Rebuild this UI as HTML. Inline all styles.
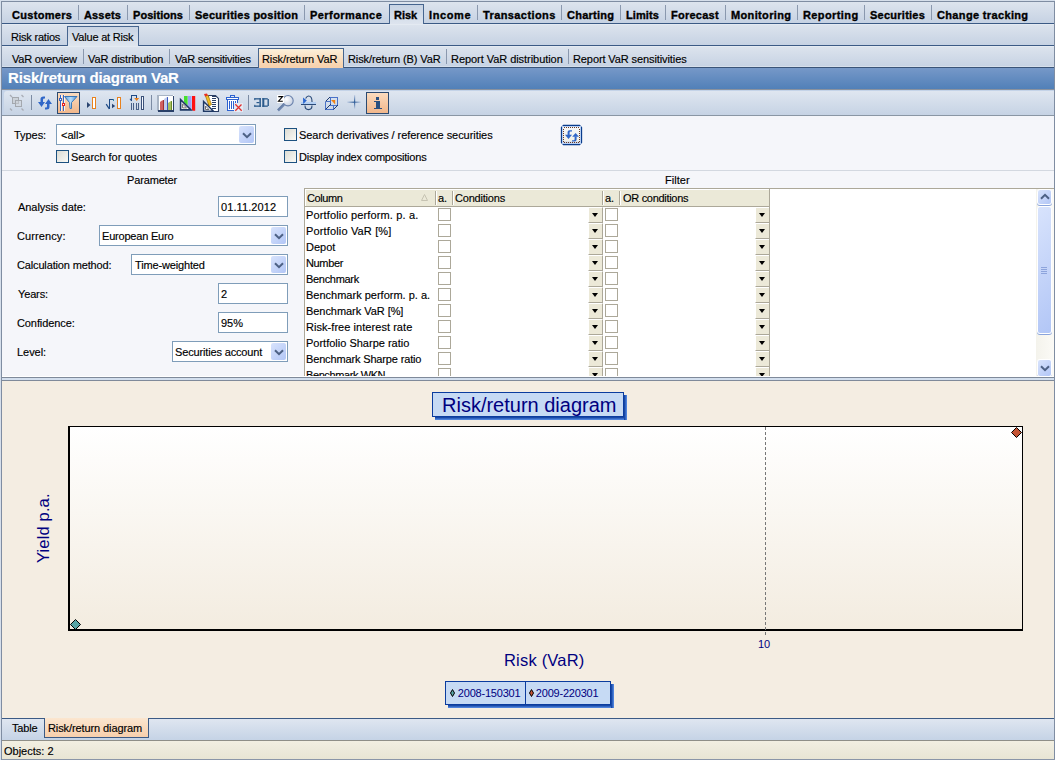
<!DOCTYPE html>
<html><head><meta charset="utf-8"><style>
*{margin:0;padding:0;box-sizing:border-box}
html,body{width:1055px;height:760px;overflow:hidden;background:#d6dfeb;font-family:"Liberation Sans",sans-serif;font-size:11px;color:#000}
.a{position:absolute}
.t{position:absolute;white-space:nowrap;line-height:13px;letter-spacing:-0.2px;-webkit-text-stroke-width:0.15px}
.b{font-weight:bold;letter-spacing:0.3px}
.sep{position:absolute;width:1px;background:#8e9bb0}
.cb{position:absolute;width:13px;height:13px;border:1px solid #1c5180;background:linear-gradient(135deg,#dcdcd4,#f8f8f4)}
.inp{position:absolute;background:#fff;border:1px solid #7f9db9}
.ddb{position:absolute;width:15px;height:17px;border-radius:2px;background:linear-gradient(135deg,#d6e2fc,#b3c7f7)}
.gcb{position:absolute;width:13px;height:13px;border:1px solid #aca899;background:#fff}
.gdd{position:absolute;width:15px;height:16px;background:#ece9d8;border-left:1px solid #fff;border-top:1px solid #fff;border-right:1px solid #aca899;border-bottom:1px solid #aca899}
.tri{position:absolute;width:0;height:0;border-left:3.5px solid transparent;border-right:3.5px solid transparent;border-top:4px solid #000}
</style></head><body>
<div class="a" style="left:1px;top:1px;width:1054px;height:759px;border-left:1px solid #7f8da2;border-top:1px solid #7f8da2;border-right:1px solid #7f8da2"></div>
<div class="a" style="left:2px;top:2px;width:1052px;height:21px;background:linear-gradient(#dde4ee,#c6d2e3)"></div>
<div class="a" style="left:2px;top:23px;width:1052px;height:1px;background:#3b5a85"></div>
<div class="a" style="left:389px;top:4px;width:35px;height:20px;background:linear-gradient(#c7d3e4,#dde4ee);border:1px solid #46658f;border-bottom:none"></div>
<div class="a" style="left:78px;top:5px;width:1px;height:15px;background:#8a98ae"></div>
<div class="a" style="left:127px;top:5px;width:1px;height:15px;background:#8a98ae"></div>
<div class="a" style="left:189px;top:5px;width:1px;height:15px;background:#8a98ae"></div>
<div class="a" style="left:304px;top:5px;width:1px;height:15px;background:#8a98ae"></div>
<div class="a" style="left:477px;top:5px;width:1px;height:15px;background:#8a98ae"></div>
<div class="a" style="left:561px;top:5px;width:1px;height:15px;background:#8a98ae"></div>
<div class="a" style="left:620px;top:5px;width:1px;height:15px;background:#8a98ae"></div>
<div class="a" style="left:665px;top:5px;width:1px;height:15px;background:#8a98ae"></div>
<div class="a" style="left:725px;top:5px;width:1px;height:15px;background:#8a98ae"></div>
<div class="a" style="left:797px;top:5px;width:1px;height:15px;background:#8a98ae"></div>
<div class="a" style="left:864px;top:5px;width:1px;height:15px;background:#8a98ae"></div>
<div class="a" style="left:931px;top:5px;width:1px;height:15px;background:#8a98ae"></div>
<div class="t" style="left:12px;top:9px;letter-spacing:0.3px;font-weight:bold;-webkit-text-stroke-width:0.35px;">Customers</div>
<div class="t" style="left:84px;top:9px;letter-spacing:0.15px;font-weight:bold;-webkit-text-stroke-width:0.35px;">Assets</div>
<div class="t" style="left:133px;top:9px;letter-spacing:0.05px;font-weight:bold;-webkit-text-stroke-width:0.35px;">Positions</div>
<div class="t" style="left:195px;top:9px;letter-spacing:0.25px;font-weight:bold;-webkit-text-stroke-width:0.35px;">Securities position</div>
<div class="t" style="left:310px;top:9px;letter-spacing:0.45px;font-weight:bold;-webkit-text-stroke-width:0.35px;">Performance</div>
<div class="t" style="left:394px;top:9px;letter-spacing:0.0px;font-weight:bold;-webkit-text-stroke-width:0.35px;">Risk</div>
<div class="t" style="left:429px;top:9px;letter-spacing:0.6px;font-weight:bold;-webkit-text-stroke-width:0.35px;">Income</div>
<div class="t" style="left:483px;top:9px;letter-spacing:0.4px;font-weight:bold;-webkit-text-stroke-width:0.35px;">Transactions</div>
<div class="t" style="left:567px;top:9px;letter-spacing:0.25px;font-weight:bold;-webkit-text-stroke-width:0.35px;">Charting</div>
<div class="t" style="left:626px;top:9px;letter-spacing:0.1px;font-weight:bold;-webkit-text-stroke-width:0.35px;">Limits</div>
<div class="t" style="left:671px;top:9px;letter-spacing:0.25px;font-weight:bold;-webkit-text-stroke-width:0.35px;">Forecast</div>
<div class="t" style="left:731px;top:9px;letter-spacing:0.35px;font-weight:bold;-webkit-text-stroke-width:0.35px;">Monitoring</div>
<div class="t" style="left:803px;top:9px;letter-spacing:0.4px;font-weight:bold;-webkit-text-stroke-width:0.35px;">Reporting</div>
<div class="t" style="left:870px;top:9px;letter-spacing:0.25px;font-weight:bold;-webkit-text-stroke-width:0.35px;">Securities</div>
<div class="t" style="left:937px;top:9px;letter-spacing:0.35px;font-weight:bold;-webkit-text-stroke-width:0.35px;">Change tracking</div>
<div class="a" style="left:2px;top:24px;width:1052px;height:21px;background:linear-gradient(#dde4ee,#c6d2e3)"></div>
<div class="a" style="left:2px;top:24px;width:1052px;height:1px;background:#e4eaf2"></div>
<div class="a" style="left:2px;top:45px;width:65px;height:1px;background:#3b5a85"></div>
<div class="a" style="left:139px;top:45px;width:915px;height:1px;background:#3b5a85"></div>
<div class="a" style="left:67px;top:26px;width:72px;height:20px;background:linear-gradient(#c9d4e4,#dfe6ef);border:1px solid #46658f;border-bottom:none"></div>
<div class="t" style="left:11px;top:31px;letter-spacing:-0.2px;">Risk ratios</div>
<div class="t" style="left:72px;top:31px;letter-spacing:-0.2px;">Value at Risk</div>
<div class="a" style="left:2px;top:46px;width:1052px;height:21px;background:linear-gradient(#dde4ee,#c6d2e3)"></div>
<div class="a" style="left:2px;top:46px;width:1052px;height:1px;background:#e4eaf2"></div>
<div class="a" style="left:258px;top:48px;width:86px;height:19px;background:linear-gradient(#fcf0da,#f7d0ab);border:1px solid #46658f;border-bottom:none"></div>
<div class="a" style="left:83px;top:49px;width:1px;height:15px;background:#8a98ae"></div>
<div class="a" style="left:169px;top:49px;width:1px;height:15px;background:#8a98ae"></div>
<div class="a" style="left:446px;top:49px;width:1px;height:15px;background:#8a98ae"></div>
<div class="a" style="left:568px;top:49px;width:1px;height:15px;background:#8a98ae"></div>
<div class="t" style="left:12px;top:53px;letter-spacing:-0.2px;">VaR overview</div>
<div class="t" style="left:88px;top:53px;letter-spacing:-0.1px;">VaR distribution</div>
<div class="t" style="left:175px;top:53px;letter-spacing:-0.25px;">VaR sensitivities</div>
<div class="t" style="left:262px;top:53px;letter-spacing:-0.1px;">Risk/return VaR</div>
<div class="t" style="left:348px;top:53px;letter-spacing:-0.1px;">Risk/return (B) VaR</div>
<div class="t" style="left:451px;top:53px;letter-spacing:-0.05px;">Report VaR distribution</div>
<div class="t" style="left:573px;top:53px;letter-spacing:-0.1px;">Report VaR sensitivities</div>
<div class="a" style="left:2px;top:66px;width:1052px;height:1px;background:#d6dfeb"></div>
<div class="a" style="left:2px;top:67px;width:1052px;height:1px;background:#3a5478"></div>
<div class="a" style="left:2px;top:68px;width:1052px;height:21px;background:linear-gradient(#7698c8,#5180b8)"></div>
<div class="a" style="left:259px;top:66px;width:84px;height:2px;background:#f8d2ae"></div>
<div class="a" style="left:258px;top:66px;width:1px;height:2px;background:#46658f"></div>
<div class="a" style="left:343px;top:66px;width:1px;height:2px;background:#46658f"></div>
<div class="t" style="left:8px;top:69px;font-size:15px;line-height:17px;font-weight:bold;color:#fff;letter-spacing:-0.15px">Risk/return diagram VaR</div>
<div class="a" style="left:2px;top:89px;width:1052px;height:1px;background:#8a929e"></div>
<div class="a" style="left:2px;top:90px;width:1052px;height:26px;background:#c4d3e8"></div>
<div class="a" style="left:4px;top:91px;width:1050px;height:24px;border-radius:3px 0 0 3px;background:linear-gradient(#dfe6f0,#c6d3e4)"></div>
<div class="a" style="left:2px;top:115px;width:1052px;height:1px;background:#8a96a4"></div>
<svg class="a" style="left:0;top:88px" width="400" height="28" viewBox="0 88 400 28" shape-rendering="crispEdges"><defs><linearGradient id="og" x1="0" y1="0" x2="0" y2="1"><stop offset="0" stop-color="#fbdcc0"/><stop offset="1" stop-color="#f1b68a"/></linearGradient><linearGradient id="fun" x1="0" y1="0" x2="1" y2="0"><stop offset="0" stop-color="#5aa0e0"/><stop offset="0.5" stop-color="#b8dcf8"/><stop offset="1" stop-color="#4a90d8"/></linearGradient></defs><rect x="12.5" y="97.5" width="6" height="6" fill="#c8ccd2" fill-opacity="0.7" stroke="#a4a8ae"/><rect x="15.5" y="100.5" width="6" height="6" fill="#d0d4da" fill-opacity="0.5" stroke="#a4a8ae"/><g stroke="#a8acb4" stroke-width="1.2" shape-rendering="auto"><line x1="10" y1="95" x2="12" y2="97"/><line x1="21.5" y1="95" x2="23.5" y2="97"/><line x1="10" y1="108.5" x2="12" y2="110.5"/><line x1="21.5" y1="108.5" x2="23.5" y2="110.5"/></g><rect x="31" y="95" width="1" height="15" fill="#7c8ba3"/><rect x="151" y="95" width="1" height="15" fill="#7c8ba3"/><rect x="248" y="95" width="1" height="15" fill="#7c8ba3"/><g fill="#2f66c8" shape-rendering="auto"><path d="M38,102 L45,102 L42.5,105.5 L41.5,107 L40.5,105.5 Z"/><path d="M40.5,102.5 L40.5,99 Q40.5,96.5 43.5,96.5 L45,96.5 L45,98.5 L43.8,98.5 Q43,98.5 43,100 L43,102.5 Z"/><path d="M45,104 L52,104 L49.5,100.5 L48.5,99 L47.5,100.5 Z"/><path d="M47,103.5 L49.5,103.5 L49.5,107 Q49.5,109.5 46.5,109.5 L45,109.5 L45,107.5 L46.2,107.5 Q47,107.5 47,106 Z"/></g><rect x="57.5" y="92.5" width="22" height="21" fill="url(#og)" stroke="#2c4a70"/><rect x="60" y="95" width="1" height="16" fill="#3a66c4"/><rect x="61" y="95" width="1" height="16" fill="#ffffff" opacity="0.8"/><rect x="63" y="95" width="1" height="16" fill="#3a66c4"/><rect x="64" y="95" width="1" height="16" fill="#ffffff" opacity="0.8"/><rect x="59" y="98" width="3" height="3" fill="#3a66c4"/><rect x="60" y="99" width="1" height="1" fill="#fff"/><rect x="62" y="103" width="3" height="3" fill="#e82020"/><rect x="63" y="104" width="1" height="1" fill="#fff"/><path d="M64.5,96.5 L77,96.5 L71.5,102.5 L71.5,108.5 L70,108.5 L69.5,102.5 Z" fill="url(#fun)" stroke="#3c78b8" stroke-width="1" shape-rendering="auto"/><path d="M87,102 L90.5,105 L87,108 Z" fill="#2a4470" shape-rendering="auto"/><rect x="92.5" y="97.5" width="3" height="11" fill="#fff" stroke="#e8821e"/><path d="M106.2,104.2 L109.3,108.8" stroke="#1e4a86" stroke-width="1.2" shape-rendering="auto"/><rect x="109" y="99" width="1.3" height="10" fill="#1e4a86"/><rect x="109" y="99" width="5" height="1.2" fill="#1e4a86"/><rect x="113" y="99" width="1.2" height="2" fill="#2a8aa8"/><path d="M112,103.8 L115.2,106 L112,108.3 Z" fill="#2a4470" shape-rendering="auto"/><rect x="117.5" y="97.5" width="3" height="11" fill="#f4f8ff" stroke="#e8821e"/><path d="M130,98.8 L131.6,101" stroke="#1e4a86" stroke-width="1.1" shape-rendering="auto"/><rect x="131" y="95" width="1.2" height="6" fill="#1e4a86"/><rect x="131" y="95" width="6" height="1.2" fill="#1e4a86"/><rect x="136" y="95" width="1.2" height="2.5" fill="#1e4a86"/><path d="M134.2,98 L139.2,98 L136.7,101 Z" fill="#e8801e" shape-rendering="auto"/><g fill="#4a6088"><rect x="131" y="103" width="1" height="7"/><rect x="133" y="103" width="1" height="7"/><rect x="136" y="103" width="1" height="7"/><rect x="138" y="103" width="1" height="7"/><rect x="136" y="109" width="3" height="1"/></g><rect x="141.5" y="96.5" width="2" height="13" fill="#f4f8ff" stroke="#3a5078"/><rect x="157" y="95" width="17" height="16" fill="#ffffff"/><rect x="157" y="95" width="16" height="1" fill="#a8b4c4"/><rect x="157" y="95" width="2" height="16" fill="#a8b4c4"/><rect x="173" y="96" width="1" height="15" fill="#2a4068"/><rect x="158" y="110" width="16" height="2" fill="#2a4068"/><g shape-rendering="auto"><path d="M160,102 L162,100.5 L164,100 L164,110 L160,110 Z" fill="#d06060"/><path d="M163,100.3 L164,100 L164,110 L163,110 Z" fill="#a03030"/><path d="M164,99 L166.5,97.3 L168,97 L168,110 L164,110 Z" fill="#c0ccec"/><path d="M167,97.2 L168,97 L168,110 L167,110 Z" fill="#3a58c0"/><path d="M168,103 L170.5,101.3 L172,101 L172,110 L168,110 Z" fill="#a8c060"/><path d="M171,101.2 L172,101 L172,110 L171,110 Z" fill="#6a8a28"/></g><g shape-rendering="auto"><path d="M184,96 L187.6,96 L187.6,105.6 L184,102 Z" fill="#44e030"/><path d="M188,96 L191.5,96 L191.5,109.5 L188,106 Z" fill="#9aa4f4"/><path d="M192,96 L195.2,96 L195.2,110.8 L193,110.8 L192,110 Z" fill="#ff1010"/><path d="M180.6,99.6 L180.6,109.9 L191,109.9 Z" fill="#fff" stroke="#1e3864" stroke-width="1.6" stroke-linejoin="miter"/><path d="M182.6,104 L182.6,107.9 L186.5,107.9 Z" fill="#fff" stroke="#707070" stroke-width="1"/></g><path d="M208.5,95.5 L215.5,95.5 L218.5,98.5 L218.5,111.5 L208.5,111.5 Z" fill="#fff" stroke="#2a3e64" stroke-width="1.1" shape-rendering="auto"/><g fill="#2a3e64"><rect x="212" y="96" width="4" height="1"/><rect x="212" y="98" width="4" height="1"/><rect x="212" y="100" width="4" height="1"/><rect x="212" y="102" width="4" height="1"/><rect x="212" y="104" width="4" height="1"/><rect x="212" y="106" width="4" height="1"/><rect x="212" y="108" width="4" height="1"/></g><path d="M203.6,101.5 L203.6,111.3 L213.5,111.3 Z" fill="#fff" stroke="#1e3864" stroke-width="1.5" shape-rendering="auto"/><path d="M205.5,106 L205.5,109.5 L209,109.5 Z" fill="none" stroke="#707070" shape-rendering="auto"/><path d="M205.5,96 L208,95 L211.5,104.5 L209,106 Z" fill="#f0c020" stroke="#a07010" stroke-width="0.7" shape-rendering="auto"/><path d="M204,94 L207,93.5 L207.8,95.5 L205,96.5 Z" fill="#e83020" shape-rendering="auto"/><rect x="227" y="100" width="11" height="11" fill="#fff"/><rect x="226" y="97" width="13" height="3" fill="#2d62d0"/><rect x="227" y="98" width="11" height="1" fill="#fff"/><rect x="230" y="95" width="5" height="2" fill="#2d62d0"/><rect x="231" y="96" width="3" height="1" fill="#dfe8f8"/><rect x="227" y="100" width="1" height="11" fill="#2d62d0"/><rect x="227" y="110" width="8" height="1" fill="#2d62d0"/><rect x="237" y="100" width="1" height="3" fill="#2d62d0"/><rect x="229" y="101" width="1" height="8" fill="#2d62d0"/><rect x="231" y="101" width="1" height="8" fill="#2d62d0"/><rect x="233" y="101" width="1" height="8" fill="#2d62d0"/><rect x="235" y="101" width="1" height="2" fill="#2d62d0"/><rect x="234" y="103" width="9" height="9" fill="#e4eaf4"/><path d="M235.3,104.3 L241.7,110.7 M241.5,104.5 L235.3,110.7" stroke="#e03030" stroke-width="1.3" shape-rendering="auto"/><g fill="#2a5a8c" shape-rendering="auto"><rect x="254.3" y="98.2" width="6.5" height="1.3"/><rect x="259.4" y="98.2" width="1.5" height="8.6"/><rect x="256.5" y="102" width="3" height="1.2"/><rect x="254.3" y="105.5" width="6.5" height="1.3"/><rect x="254.3" y="98.2" width="1" height="2"/><rect x="254.3" y="104.8" width="1" height="2"/><rect x="262.3" y="98.2" width="2" height="8.6"/><rect x="262.3" y="98.2" width="5.5" height="1.3"/><rect x="262.3" y="105.5" width="5.5" height="1.3"/><rect x="267.5" y="99" width="1.4" height="7"/></g><defs><radialGradient id="mg" cx="0.35" cy="0.35" r="0.7"><stop offset="0" stop-color="#ffffff"/><stop offset="1" stop-color="#c4cee0"/></radialGradient><linearGradient id="hg" x1="0" y1="0" x2="1" y2="1"><stop offset="0" stop-color="#3c5a8a"/><stop offset="1" stop-color="#9aaccc"/></linearGradient></defs><circle cx="288" cy="100.7" r="5.2" fill="url(#mg)" stroke="#6a82ac" stroke-width="1.1" shape-rendering="auto"/><line x1="284" y1="104.5" x2="278" y2="110.5" stroke="url(#hg)" stroke-width="2.6" shape-rendering="auto"/><rect x="277" y="95" width="7" height="8" fill="#fff"/><path d="M278.3,96.6 L282.6,96.6 L278.5,101.2 L282.8,101.2" fill="none" stroke="#000" stroke-width="1.1" shape-rendering="auto"/><rect x="301" y="102" width="15" height="2" fill="#b4d0f4"/><rect x="301" y="104" width="15" height="1" fill="#2a4a78"/><path d="M305.6,98.6 Q307,96 308.5,96 Q312,96 312,101.5 L312,102" fill="none" stroke="#2a4a78" stroke-width="1.1" shape-rendering="auto"/><path d="M305,105.5 Q305,109.6 308.5,109.6 Q312,109.6 312,105.5" fill="none" stroke="#2a4a78" stroke-width="1.1" shape-rendering="auto"/><path d="M303,97.6 L306.8,100.6 L303.2,104 Z" fill="#2a66d0" shape-rendering="auto"/><g fill="none" stroke="#4a72c8" stroke-width="1"><rect x="330.5" y="97.5" width="7" height="8"/><path d="M325.5,101.5 L325.5,109.5 L333.5,109.5 L333.5,105.5 M325.5,101.5 L330.5,101.5"/></g><path d="M331,100 L335.2,100 L335.2,104.5 Z" fill="#f08010" shape-rendering="auto"/><g stroke="#1e3a70" stroke-width="1" shape-rendering="auto" fill="none"><line x1="325.5" y1="101.5" x2="330" y2="97"/><line x1="333.5" y1="109.5" x2="338" y2="105"/><line x1="325.5" y1="109.5" x2="331" y2="104"/></g><defs><linearGradient id="pv" x1="0" y1="0" x2="0" y2="1"><stop offset="0" stop-color="#c8d4e8"/><stop offset="0.5" stop-color="#2c5a96"/><stop offset="1" stop-color="#c8d4e8"/></linearGradient><linearGradient id="ph" x1="0" y1="0" x2="1" y2="0"><stop offset="0" stop-color="#c8d4e8"/><stop offset="0.5" stop-color="#2c5a96"/><stop offset="1" stop-color="#c8d4e8"/></linearGradient></defs><rect x="354" y="95" width="1.2" height="14" fill="url(#pv)" shape-rendering="auto"/><rect x="347" y="101.6" width="14" height="1.2" fill="url(#ph)" shape-rendering="auto"/><rect x="366.5" y="92.5" width="22" height="21" fill="url(#og)" stroke="#2c4a70"/><rect x="376" y="97" width="3" height="3" fill="#2a5080"/><rect x="376" y="101" width="4" height="7" fill="#2a5080"/><rect x="374" y="101" width="2" height="1" fill="#2a5080"/><rect x="374" y="108" width="8" height="1" fill="#2a5080"/></svg>
<div class="a" style="left:2px;top:116px;width:1052px;height:261px;background:#f5f6fa"></div>
<div class="t" style="left:14px;top:129px;letter-spacing:-0.05px;">Types:</div>
<div class="a" style="left:56px;top:124px;width:200px;height:21px;background:#fff;border:1px solid #7f9db9"></div>
<div class="t" style="left:61px;top:129px;letter-spacing:0.0px;">&lt;all&gt;</div>
<div class="a" style="left:239px;top:126px;width:15px;height:17px;border-radius:2px;background:linear-gradient(135deg,#d8e3fc,#b2c6f6)"></div>
<svg class="a" style="left:241.5px;top:129.5px" width="10" height="10" viewBox="-5 -5 10 10"><path d="M-4,-1.8 L0,2.2 L4,-1.8" fill="none" stroke="#4d6185" stroke-width="2"/></svg>
<div class="a" style="left:56px;top:150px;width:13px;height:13px;border:1px solid #1c5180;background:linear-gradient(135deg,#dcdcd4,#fafaf6)"></div>
<div class="t" style="left:71px;top:151px;letter-spacing:-0.05px;">Search for quotes</div>
<div class="a" style="left:284px;top:128px;width:13px;height:13px;border:1px solid #1c5180;background:linear-gradient(135deg,#dcdcd4,#fafaf6)"></div>
<div class="t" style="left:299px;top:129px;letter-spacing:-0.05px;">Search derivatives / reference securities</div>
<div class="a" style="left:284px;top:150px;width:13px;height:13px;border:1px solid #1c5180;background:linear-gradient(135deg,#dcdcd4,#fafaf6)"></div>
<div class="t" style="left:299px;top:151px;letter-spacing:-0.2px;">Display index compositions</div>
<svg class="a" style="left:560px;top:124px" width="24" height="22" viewBox="560 124 24 22"><defs><linearGradient id="rg" x1="0" y1="0" x2="0" y2="1"><stop offset="0" stop-color="#f6f8fc"/><stop offset="0.8" stop-color="#f0f0e8"/><stop offset="1" stop-color="#90b0f0"/></linearGradient></defs><path d="M563.5,125.5 L579.5,125.5 L581.5,127.5 L581.5,142.5 L579.5,144.5 L563.5,144.5 L561.5,142.5 L561.5,127.5 Z" fill="url(#rg)" stroke="#0a3c8c" stroke-width="1.3"/><rect x="562.5" y="126.5" width="18" height="17" fill="none" stroke="#b8d0f4" stroke-width="1" shape-rendering="crispEdges"/><g fill="#6a3a22" shape-rendering="crispEdges"><rect x="564" y="127" width="1" height="1"/><rect x="564" y="142" width="1" height="1"/><rect x="566" y="127" width="1" height="1"/><rect x="566" y="142" width="1" height="1"/><rect x="568" y="127" width="1" height="1"/><rect x="568" y="142" width="1" height="1"/><rect x="570" y="127" width="1" height="1"/><rect x="570" y="142" width="1" height="1"/><rect x="572" y="127" width="1" height="1"/><rect x="572" y="142" width="1" height="1"/><rect x="574" y="127" width="1" height="1"/><rect x="574" y="142" width="1" height="1"/><rect x="576" y="127" width="1" height="1"/><rect x="576" y="142" width="1" height="1"/><rect x="578" y="127" width="1" height="1"/><rect x="578" y="142" width="1" height="1"/><rect x="563" y="129" width="1" height="1"/><rect x="579" y="129" width="1" height="1"/><rect x="563" y="131" width="1" height="1"/><rect x="579" y="131" width="1" height="1"/><rect x="563" y="133" width="1" height="1"/><rect x="579" y="133" width="1" height="1"/><rect x="563" y="135" width="1" height="1"/><rect x="579" y="135" width="1" height="1"/><rect x="563" y="137" width="1" height="1"/><rect x="579" y="137" width="1" height="1"/><rect x="563" y="139" width="1" height="1"/><rect x="579" y="139" width="1" height="1"/><rect x="563" y="141" width="1" height="1"/><rect x="579" y="141" width="1" height="1"/></g><g fill="#2f66c8"><path d="M565,134.8 L572,134.8 L568.5,139 Z"/><path d="M567.6,135 L567.6,132 Q567.6,130.2 569.5,130.2 L572,130.2 L572,131.6 L570.6,131.6 Q569.6,131.6 569.6,132.6 L569.6,135 Z"/><path d="M572.2,136.8 L579,136.8 L575.6,133 Z"/><path d="M574.6,136.5 L576.6,136.5 L576.6,139.6 Q576.6,141.6 574.6,141.6 L572,141.6 L572,140.2 L573.6,140.2 Q574.6,140.2 574.6,139.2 Z"/></g></svg>
<div class="a" style="left:2px;top:170px;width:1052px;height:1px;background:#d3d8e0"></div>
<div class="t" style="left:127px;top:174px;letter-spacing:-0.15px;">Parameter</div>
<div class="t" style="left:665px;top:174px;letter-spacing:0.05px;">Filter</div>
<div class="t" style="left:18px;top:201px;letter-spacing:-0.05px;">Analysis date:</div>
<div class="t" style="left:17px;top:230px;letter-spacing:0.1px;">Currency:</div>
<div class="t" style="left:17px;top:259px;letter-spacing:-0.15px;">Calculation method:</div>
<div class="t" style="left:18px;top:288px;letter-spacing:-0.15px;">Years:</div>
<div class="t" style="left:17px;top:317px;letter-spacing:-0.1px;">Confidence:</div>
<div class="t" style="left:17px;top:346px;letter-spacing:-0.05px;">Level:</div>
<div class="a" style="left:218px;top:196px;width:70px;height:21px;background:#fff;border:1px solid #7f9db9"></div>
<div class="t" style="left:221px;top:201px;letter-spacing:0.1px;">01.11.2012</div>
<div class="a" style="left:99px;top:225px;width:189px;height:21px;background:#fff;border:1px solid #7f9db9"></div>
<div class="t" style="left:102px;top:230px;letter-spacing:-0.2px;">European Euro</div>
<div class="a" style="left:271px;top:227px;width:15px;height:17px;border-radius:2px;background:linear-gradient(135deg,#d8e3fc,#b2c6f6)"></div>
<svg class="a" style="left:273.5px;top:230.5px" width="10" height="10" viewBox="-5 -5 10 10"><path d="M-4,-1.8 L0,2.2 L4,-1.8" fill="none" stroke="#4d6185" stroke-width="2"/></svg>
<div class="a" style="left:131px;top:254px;width:157px;height:21px;background:#fff;border:1px solid #7f9db9"></div>
<div class="t" style="left:135px;top:259px;letter-spacing:-0.15px;">Time-weighted</div>
<div class="a" style="left:271px;top:256px;width:15px;height:17px;border-radius:2px;background:linear-gradient(135deg,#d8e3fc,#b2c6f6)"></div>
<svg class="a" style="left:273.5px;top:259.5px" width="10" height="10" viewBox="-5 -5 10 10"><path d="M-4,-1.8 L0,2.2 L4,-1.8" fill="none" stroke="#4d6185" stroke-width="2"/></svg>
<div class="a" style="left:218px;top:283px;width:70px;height:21px;background:#fff;border:1px solid #7f9db9"></div>
<div class="t" style="left:221px;top:288px;letter-spacing:0.0px;">2</div>
<div class="a" style="left:218px;top:312px;width:70px;height:21px;background:#fff;border:1px solid #7f9db9"></div>
<div class="t" style="left:221px;top:317px;letter-spacing:0.0px;">95%</div>
<div class="a" style="left:172px;top:341px;width:116px;height:21px;background:#fff;border:1px solid #7f9db9"></div>
<div class="t" style="left:175px;top:346px;letter-spacing:-0.15px;">Securities account</div>
<div class="a" style="left:271px;top:343px;width:15px;height:17px;border-radius:2px;background:linear-gradient(135deg,#d8e3fc,#b2c6f6)"></div>
<svg class="a" style="left:273.5px;top:346.5px" width="10" height="10" viewBox="-5 -5 10 10"><path d="M-4,-1.8 L0,2.2 L4,-1.8" fill="none" stroke="#4d6185" stroke-width="2"/></svg>
<div class="a" style="left:304px;top:188px;width:750px;height:189px;background:#fff;border-left:1px solid #aca899;border-top:1px solid #aca899"></div>
<div class="a" style="left:305px;top:189px;width:465px;height:17px;background:#ebe9d8;border-top:1px solid #fff;border-left:1px solid #fff"></div>
<div class="a" style="left:305px;top:206px;width:465px;height:1px;background:#aca899"></div>
<div class="a" style="left:769px;top:189px;width:1px;height:188px;background:#aca899"></div>
<div class="a" style="left:435px;top:191px;width:1px;height:14px;background:#aca899"></div>
<div class="a" style="left:436px;top:191px;width:1px;height:14px;background:#fff"></div>
<div class="a" style="left:452px;top:191px;width:1px;height:14px;background:#aca899"></div>
<div class="a" style="left:453px;top:191px;width:1px;height:14px;background:#fff"></div>
<div class="a" style="left:602px;top:191px;width:1px;height:14px;background:#aca899"></div>
<div class="a" style="left:603px;top:191px;width:1px;height:14px;background:#fff"></div>
<div class="a" style="left:619px;top:191px;width:1px;height:14px;background:#aca899"></div>
<div class="a" style="left:620px;top:191px;width:1px;height:14px;background:#fff"></div>
<div class="t" style="left:307px;top:192px;letter-spacing:-0.4px;">Column</div>
<div class="t" style="left:438px;top:192px;">a.</div>
<div class="t" style="left:455px;top:192px;letter-spacing:-0.2px;">Conditions</div>
<div class="t" style="left:605px;top:192px;">a.</div>
<div class="t" style="left:623px;top:192px;letter-spacing:-0.3px;">OR conditions</div>
<svg class="a" style="left:420px;top:193px" width="10" height="9"><path d="M1.5,7.5 L4.5,1.5 L7.5,7.5 Z" fill="none" stroke="#c6c3b2" stroke-width="1"/></svg>
<div class="a" style="left:305px;top:207px;width:464px;height:170px;overflow:hidden">
<div class="t" style="left:1px;top:2px;letter-spacing:0.15px">Portfolio perform. p. a.</div>
<div class="a" style="left:133px;top:1px;width:13px;height:13px;border:1px solid #aca899;background:#fff"></div>
<div class="a" style="left:300px;top:1px;width:13px;height:13px;border:1px solid #aca899;background:#fff"></div>
<div class="a" style="left:283px;top:0px;width:15px;height:16px;background:#ece9d8;border-left:1px solid #fff;border-top:1px solid #fff;border-right:1px solid #aca899;border-bottom:1px solid #aca899"></div>
<div class="a" style="left:450px;top:0px;width:15px;height:16px;background:#ece9d8;border-left:1px solid #fff;border-top:1px solid #fff;border-right:1px solid #aca899;border-bottom:1px solid #aca899"></div>
<div class="tri" style="left:286.5px;top:6px"></div>
<div class="tri" style="left:453.5px;top:6px"></div>
<div class="t" style="left:1px;top:18px;letter-spacing:0.15px">Portfolio VaR [%]</div>
<div class="a" style="left:133px;top:17px;width:13px;height:13px;border:1px solid #aca899;background:#fff"></div>
<div class="a" style="left:300px;top:17px;width:13px;height:13px;border:1px solid #aca899;background:#fff"></div>
<div class="a" style="left:283px;top:16px;width:15px;height:16px;background:#ece9d8;border-left:1px solid #fff;border-top:1px solid #fff;border-right:1px solid #aca899;border-bottom:1px solid #aca899"></div>
<div class="a" style="left:450px;top:16px;width:15px;height:16px;background:#ece9d8;border-left:1px solid #fff;border-top:1px solid #fff;border-right:1px solid #aca899;border-bottom:1px solid #aca899"></div>
<div class="tri" style="left:286.5px;top:22px"></div>
<div class="tri" style="left:453.5px;top:22px"></div>
<div class="t" style="left:1px;top:34px;letter-spacing:0.0px">Depot</div>
<div class="a" style="left:133px;top:33px;width:13px;height:13px;border:1px solid #aca899;background:#fff"></div>
<div class="a" style="left:300px;top:33px;width:13px;height:13px;border:1px solid #aca899;background:#fff"></div>
<div class="a" style="left:283px;top:32px;width:15px;height:16px;background:#ece9d8;border-left:1px solid #fff;border-top:1px solid #fff;border-right:1px solid #aca899;border-bottom:1px solid #aca899"></div>
<div class="a" style="left:450px;top:32px;width:15px;height:16px;background:#ece9d8;border-left:1px solid #fff;border-top:1px solid #fff;border-right:1px solid #aca899;border-bottom:1px solid #aca899"></div>
<div class="tri" style="left:286.5px;top:38px"></div>
<div class="tri" style="left:453.5px;top:38px"></div>
<div class="t" style="left:1px;top:50px;letter-spacing:-0.35px">Number</div>
<div class="a" style="left:133px;top:49px;width:13px;height:13px;border:1px solid #aca899;background:#fff"></div>
<div class="a" style="left:300px;top:49px;width:13px;height:13px;border:1px solid #aca899;background:#fff"></div>
<div class="a" style="left:283px;top:48px;width:15px;height:16px;background:#ece9d8;border-left:1px solid #fff;border-top:1px solid #fff;border-right:1px solid #aca899;border-bottom:1px solid #aca899"></div>
<div class="a" style="left:450px;top:48px;width:15px;height:16px;background:#ece9d8;border-left:1px solid #fff;border-top:1px solid #fff;border-right:1px solid #aca899;border-bottom:1px solid #aca899"></div>
<div class="tri" style="left:286.5px;top:54px"></div>
<div class="tri" style="left:453.5px;top:54px"></div>
<div class="t" style="left:1px;top:66px;letter-spacing:-0.3px">Benchmark</div>
<div class="a" style="left:133px;top:65px;width:13px;height:13px;border:1px solid #aca899;background:#fff"></div>
<div class="a" style="left:300px;top:65px;width:13px;height:13px;border:1px solid #aca899;background:#fff"></div>
<div class="a" style="left:283px;top:64px;width:15px;height:16px;background:#ece9d8;border-left:1px solid #fff;border-top:1px solid #fff;border-right:1px solid #aca899;border-bottom:1px solid #aca899"></div>
<div class="a" style="left:450px;top:64px;width:15px;height:16px;background:#ece9d8;border-left:1px solid #fff;border-top:1px solid #fff;border-right:1px solid #aca899;border-bottom:1px solid #aca899"></div>
<div class="tri" style="left:286.5px;top:70px"></div>
<div class="tri" style="left:453.5px;top:70px"></div>
<div class="t" style="left:1px;top:82px;letter-spacing:0.0px">Benchmark perform. p. a.</div>
<div class="a" style="left:133px;top:81px;width:13px;height:13px;border:1px solid #aca899;background:#fff"></div>
<div class="a" style="left:300px;top:81px;width:13px;height:13px;border:1px solid #aca899;background:#fff"></div>
<div class="a" style="left:283px;top:80px;width:15px;height:16px;background:#ece9d8;border-left:1px solid #fff;border-top:1px solid #fff;border-right:1px solid #aca899;border-bottom:1px solid #aca899"></div>
<div class="a" style="left:450px;top:80px;width:15px;height:16px;background:#ece9d8;border-left:1px solid #fff;border-top:1px solid #fff;border-right:1px solid #aca899;border-bottom:1px solid #aca899"></div>
<div class="tri" style="left:286.5px;top:86px"></div>
<div class="tri" style="left:453.5px;top:86px"></div>
<div class="t" style="left:1px;top:98px;letter-spacing:-0.05px">Benchmark VaR [%]</div>
<div class="a" style="left:133px;top:97px;width:13px;height:13px;border:1px solid #aca899;background:#fff"></div>
<div class="a" style="left:300px;top:97px;width:13px;height:13px;border:1px solid #aca899;background:#fff"></div>
<div class="a" style="left:283px;top:96px;width:15px;height:16px;background:#ece9d8;border-left:1px solid #fff;border-top:1px solid #fff;border-right:1px solid #aca899;border-bottom:1px solid #aca899"></div>
<div class="a" style="left:450px;top:96px;width:15px;height:16px;background:#ece9d8;border-left:1px solid #fff;border-top:1px solid #fff;border-right:1px solid #aca899;border-bottom:1px solid #aca899"></div>
<div class="tri" style="left:286.5px;top:102px"></div>
<div class="tri" style="left:453.5px;top:102px"></div>
<div class="t" style="left:1px;top:114px;letter-spacing:0.05px">Risk-free interest rate</div>
<div class="a" style="left:133px;top:113px;width:13px;height:13px;border:1px solid #aca899;background:#fff"></div>
<div class="a" style="left:300px;top:113px;width:13px;height:13px;border:1px solid #aca899;background:#fff"></div>
<div class="a" style="left:283px;top:112px;width:15px;height:16px;background:#ece9d8;border-left:1px solid #fff;border-top:1px solid #fff;border-right:1px solid #aca899;border-bottom:1px solid #aca899"></div>
<div class="a" style="left:450px;top:112px;width:15px;height:16px;background:#ece9d8;border-left:1px solid #fff;border-top:1px solid #fff;border-right:1px solid #aca899;border-bottom:1px solid #aca899"></div>
<div class="tri" style="left:286.5px;top:118px"></div>
<div class="tri" style="left:453.5px;top:118px"></div>
<div class="t" style="left:1px;top:130px;letter-spacing:0.0px">Portfolio Sharpe ratio</div>
<div class="a" style="left:133px;top:129px;width:13px;height:13px;border:1px solid #aca899;background:#fff"></div>
<div class="a" style="left:300px;top:129px;width:13px;height:13px;border:1px solid #aca899;background:#fff"></div>
<div class="a" style="left:283px;top:128px;width:15px;height:16px;background:#ece9d8;border-left:1px solid #fff;border-top:1px solid #fff;border-right:1px solid #aca899;border-bottom:1px solid #aca899"></div>
<div class="a" style="left:450px;top:128px;width:15px;height:16px;background:#ece9d8;border-left:1px solid #fff;border-top:1px solid #fff;border-right:1px solid #aca899;border-bottom:1px solid #aca899"></div>
<div class="tri" style="left:286.5px;top:134px"></div>
<div class="tri" style="left:453.5px;top:134px"></div>
<div class="t" style="left:1px;top:146px;letter-spacing:-0.15px">Benchmark Sharpe ratio</div>
<div class="a" style="left:133px;top:145px;width:13px;height:13px;border:1px solid #aca899;background:#fff"></div>
<div class="a" style="left:300px;top:145px;width:13px;height:13px;border:1px solid #aca899;background:#fff"></div>
<div class="a" style="left:283px;top:144px;width:15px;height:16px;background:#ece9d8;border-left:1px solid #fff;border-top:1px solid #fff;border-right:1px solid #aca899;border-bottom:1px solid #aca899"></div>
<div class="a" style="left:450px;top:144px;width:15px;height:16px;background:#ece9d8;border-left:1px solid #fff;border-top:1px solid #fff;border-right:1px solid #aca899;border-bottom:1px solid #aca899"></div>
<div class="tri" style="left:286.5px;top:150px"></div>
<div class="tri" style="left:453.5px;top:150px"></div>
<div class="t" style="left:1px;top:162px;letter-spacing:-0.4px">Benchmark WKN</div>
<div class="a" style="left:133px;top:161px;width:13px;height:13px;border:1px solid #aca899;background:#fff"></div>
<div class="a" style="left:300px;top:161px;width:13px;height:13px;border:1px solid #aca899;background:#fff"></div>
<div class="a" style="left:283px;top:160px;width:15px;height:16px;background:#ece9d8;border-left:1px solid #fff;border-top:1px solid #fff;border-right:1px solid #aca899;border-bottom:1px solid #aca899"></div>
<div class="a" style="left:450px;top:160px;width:15px;height:16px;background:#ece9d8;border-left:1px solid #fff;border-top:1px solid #fff;border-right:1px solid #aca899;border-bottom:1px solid #aca899"></div>
<div class="tri" style="left:286.5px;top:166px"></div>
<div class="tri" style="left:453.5px;top:166px"></div>
</div>
<div class="a" style="left:1036px;top:189px;width:18px;height:187px;background:linear-gradient(90deg,#f4f3ec,#fbfaf6)"></div>
<div class="a" style="left:1037px;top:189px;width:15px;height:16px;border-radius:3px;background:#fff;box-shadow:0 1px 0 #8aa4dc"></div>
<div class="a" style="left:1038px;top:190px;width:13px;height:14px;border-radius:2px;background:linear-gradient(135deg,#d8e3fc,#b2c6f6)"></div>
<svg class="a" style="left:1039.5px;top:192px" width="10" height="10" viewBox="-5 -5 10 10"><path d="M-4,1.8 L0,-2.2 L4,1.8" fill="none" stroke="#4d6185" stroke-width="2"/></svg>
<div class="a" style="left:1037px;top:206px;width:15px;height:128px;border-radius:3px;background:#fff;box-shadow:0 1px 0 #8aa4dc"></div>
<div class="a" style="left:1038px;top:207px;width:13px;height:126px;border-radius:2px;background:linear-gradient(135deg,#d8e3fc,#b2c6f6)"></div>
<div class="a" style="left:1041px;top:267px;width:6px;height:1px;background:#8da4dc"></div>
<div class="a" style="left:1041px;top:269px;width:6px;height:1px;background:#8da4dc"></div>
<div class="a" style="left:1041px;top:271px;width:6px;height:1px;background:#8da4dc"></div>
<div class="a" style="left:1041px;top:273px;width:6px;height:1px;background:#8da4dc"></div>
<div class="a" style="left:1037px;top:359px;width:15px;height:18px;border-radius:3px;background:#fff;box-shadow:0 1px 0 #8aa4dc"></div>
<div class="a" style="left:1038px;top:360px;width:13px;height:16px;border-radius:2px;background:linear-gradient(135deg,#d8e3fc,#b2c6f6)"></div>
<svg class="a" style="left:1039.5px;top:363px" width="10" height="10" viewBox="-5 -5 10 10"><path d="M-4,-1.8 L0,2.2 L4,-1.8" fill="none" stroke="#4d6185" stroke-width="2"/></svg>
<div class="a" style="left:2px;top:376px;width:1052px;height:1px;background:#fff"></div>
<div class="a" style="left:2px;top:377px;width:1052px;height:1px;background:#7f8a9a"></div>
<div class="a" style="left:2px;top:378px;width:1052px;height:2px;background:#d3dfee"></div>
<div class="a" style="left:2px;top:380px;width:1052px;height:1px;background:#7f8a9a"></div>
<div class="a" style="left:2px;top:381px;width:1052px;height:337px;background:#f4ede2"></div>
<div class="a" style="left:68px;top:426px;width:955px;height:205px;background:linear-gradient(#ffffff,#f3ece0);border-left:2px solid #000;border-top:1px solid #000;border-right:1px solid #000;border-bottom:2px solid #000"></div>
<svg class="a" style="left:764px;top:427px" width="3" height="210"><line x1="1.5" y1="0" x2="1.5" y2="208" stroke="#777" stroke-width="1" stroke-dasharray="3,2"/></svg>
<div class="t" style="left:758px;top:638px;-webkit-text-stroke-width:0;color:#000080;letter-spacing:0">10</div>
<svg class="a" style="left:1010px;top:426px" width="14" height="14"><path d="M6.5,1.5 L11.5,6.5 L6.5,11.5 L1.5,6.5 Z" fill="#c45434" stroke="#000" stroke-width="1"/></svg>
<svg class="a" style="left:69px;top:618px" width="14" height="14"><path d="M6.5,1.5 L11.5,6.5 L6.5,11.5 L1.5,6.5 Z" fill="#58a4a4" stroke="#000" stroke-width="1"/></svg>
<div class="a" style="left:435px;top:417px;width:192px;height:3px;background:linear-gradient(#0a3a9a,#5a90e8)"></div>
<div class="a" style="left:624px;top:395px;width:3px;height:25px;background:linear-gradient(90deg,#0a3a9a,#5a90e8)"></div>
<div class="a" style="left:432px;top:392px;width:192px;height:25px;background:#c6daf4;border:1px solid #0b3c9e"></div>
<div class="t" style="left:442px;top:394px;font-size:20px;line-height:22px;-webkit-text-stroke-width:0;color:#000080;letter-spacing:0">Risk/return diagram</div>
<div class="t" style="left:504px;top:651px;font-size:16.5px;line-height:19px;-webkit-text-stroke-width:0;color:#000080;letter-spacing:0.2px">Risk (VaR)</div>
<div class="t" style="left:34px;top:563px;font-size:16.5px;line-height:19px;-webkit-text-stroke-width:0;color:#000080;letter-spacing:0.15px;transform-origin:0 0;transform:rotate(-90deg)">Yield p.a.</div>
<div class="a" style="left:448px;top:705px;width:166px;height:3px;background:linear-gradient(#0a3a9a,#5a90e8)"></div>
<div class="a" style="left:611px;top:684px;width:3px;height:24px;background:linear-gradient(90deg,#0a3a9a,#5a90e8)"></div>
<div class="a" style="left:445px;top:681px;width:166px;height:24px;background:#c6daf4;border:1px solid #0b3c9e"></div>
<div class="a" style="left:525px;top:682px;width:1px;height:22px;background:#0b3c9e"></div>
<svg class="a" style="left:450px;top:689px" width="6" height="9"><path d="M2.5,0.5 L4.5,4 L2.5,7.5 L0.5,4 Z" fill="#58a4a4" stroke="#000" stroke-width="1"/></svg>
<svg class="a" style="left:529px;top:689px" width="6" height="9"><path d="M2.5,0.5 L4.5,4 L2.5,7.5 L0.5,4 Z" fill="#c45434" stroke="#000" stroke-width="1"/></svg>
<div class="t" style="left:457.8px;top:687px;-webkit-text-stroke-width:0;color:#000080;letter-spacing:-0.2px">2008-150301</div>
<div class="t" style="left:535.8px;top:687px;-webkit-text-stroke-width:0;color:#000080;letter-spacing:-0.2px">2009-220301</div>
<div class="a" style="left:2px;top:718px;width:1052px;height:1px;background:#3b5a85"></div>
<div class="a" style="left:2px;top:719px;width:1052px;height:21px;background:linear-gradient(#dfe6f0,#c5d3e6)"></div>
<div class="a" style="left:44px;top:718px;width:105px;height:20px;background:linear-gradient(#fbe6cf,#f7cfac);border:1px solid #3b5a85;border-top:none"></div>
<div class="t" style="left:12px;top:722px;letter-spacing:-0.15px;">Table</div>
<div class="t" style="left:48px;top:722px;letter-spacing:-0.1px;">Risk/return diagram</div>
<div class="a" style="left:2px;top:740px;width:1052px;height:1px;background:#8f8f88"></div>
<div class="a" style="left:2px;top:741px;width:1052px;height:18px;background:linear-gradient(#f2efe2,#e8e5d4)"></div>
<div class="a" style="left:2px;top:759px;width:1053px;height:1px;background:#8a96a8"></div>
<div class="t" style="left:4px;top:745px;letter-spacing:0.0px;">Objects: 2</div>
</body></html>
